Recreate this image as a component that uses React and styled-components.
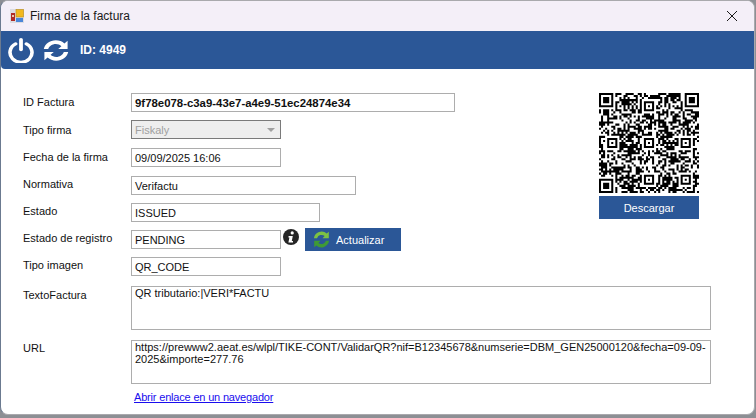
import React from "react";
import styled, { createGlobalStyle } from "styled-components";

const GlobalStyle = createGlobalStyle`
  html, body {
    margin: 0;
    padding: 0;
    width: 756px;
    height: 418px;
    overflow: hidden;
    background: #8d8f94;
  }
`;

// v8 qr is 49 modules. The data part is only noise from a seeded generator.
const QR_SIZE = 49;
const buildQr = () => {
  const cells = [];
  let seed = 4949;
  for (let y = 0; y < QR_SIZE; y++) {
    const row = [];
    for (let x = 0; x < QR_SIZE; x++) {
      seed = (seed * 1103515245 + 12345) & 0x7fffffff;
      row.push((seed >> 16) % 100 < 53);
    }
    cells.push(row);
  }
  const stamp = (ox, oy, size) => {
    for (let y = -1; y <= size; y++) {
      for (let x = -1; x <= size; x++) {
        const cx = ox + x;
        const cy = oy + y;
        if (cx < 0 || cy < 0 || cx >= QR_SIZE || cy >= QR_SIZE) continue;
        const d = Math.max(
          Math.abs(x - (size - 1) / 2),
          Math.abs(y - (size - 1) / 2)
        );
        const half = (size - 1) / 2;
        if (d > half) cells[cy][cx] = false;
        else if (size === 7) cells[cy][cx] = d !== 2;
        else cells[cy][cx] = d !== 1;
      }
    }
  };
  stamp(0, 0, 7);
  stamp(42, 0, 7);
  stamp(0, 42, 7);
  [
    [22, 4],
    [4, 22],
    [22, 22],
    [40, 22],
    [22, 40],
    [40, 40],
  ].forEach(([x, y]) => stamp(x, y, 5));
  for (let i = 8; i < 41; i++) {
    cells[6][i] = i % 2 === 0;
    cells[i][6] = i % 2 === 0;
  }
  return cells;
};

const QrCode = () => {
  const cells = buildQr();
  let d = "";
  cells.forEach((row, y) =>
    row.forEach((on, x) => {
      if (on) d += `M${x} ${y}h1v1h-1z`;
    })
  );
  return (
    <QrSvg viewBox={`0 0 ${QR_SIZE} ${QR_SIZE}`}>
      <path d={d} fill="#000" />
    </QrSvg>
  );
};

const AppIcon = () => (
  <svg width="14" height="14" viewBox="0 0 14 14">
    <rect x="0" y="0" width="14" height="14" fill="#dcdce2" />
    <rect x="1" y="4" width="4" height="8" fill="#b02a25" />
    <rect x="2" y="6" width="2" height="2" fill="#e8c8b0" />
    <rect x="6" y="0.5" width="7.5" height="7.5" fill="#f2b81f" stroke="#b98a1a" strokeWidth="0.6" />
    <rect x="6" y="9" width="7" height="4" fill="#4a86d8" />
  </svg>
);

const PowerIcon = () => (
  <svg width="28" height="25" viewBox="0 0 28 28" preserveAspectRatio="none" fill="none">
    <path
      d="M8.6 6.6A11 11 0 1 0 19.4 6.6"
      stroke="#fff"
      strokeWidth="3.6"
      strokeLinecap="round"
    />
    <path d="M14 2v11" stroke="#fff" strokeWidth="3.8" strokeLinecap="round" />
  </svg>
);

const RefreshIcon = () => (
  <svg width="28" height="25" viewBox="0 0 28 28" preserveAspectRatio="none" fill="#fff">
    <path d="M1.8 12.4C2.8 6.8 7.8 2.6 13.8 2.6c3.4 0 6.4 1.3 8.6 3.5L25.6 3v9.4h-9.4l3.2-3.2c-1.4-1.5-3.4-2.4-5.6-2.4-3.6 0-6.7 2.4-7.6 5.6z" />
    <path d="M26.2 15.6c-1 5.6-6 9.8-12 9.8-3.4 0-6.4-1.3-8.6-3.5L2.4 25v-9.4h9.4l-3.2 3.2c1.4 1.5 3.4 2.4 5.6 2.4 3.6 0 6.7-2.4 7.6-5.6z" />
  </svg>
);

const GreenRefresh = () => (
  <svg width="17" height="17" viewBox="1.5 1.5 13 13">
    <path
      d="M2.2 7A6 6 0 0 1 12 3.4L13.6 2v5H8.8l1.6-1.7A3.7 3.7 0 0 0 4.6 7z"
      fill="#7cc143"
    />
    <path
      d="M13.8 9A6 6 0 0 1 4 12.6L2.4 14V9h4.8l-1.6 1.7A3.7 3.7 0 0 0 11.4 9z"
      fill="#3f9a35"
    />
  </svg>
);

const InfoIcon = () => (
  <svg width="16" height="16" viewBox="0 0 16 16">
    <circle cx="8" cy="8" r="8" fill="#262626" />
    <circle cx="9.2" cy="3.9" r="1.6" fill="#fff" />
    <path d="M5.6 7h4.2l-1 5h1.2v1.6H5.4l1-5.2H5.4z" fill="#fff" />
  </svg>
);

const CloseIcon = () => (
  <svg width="10" height="10" viewBox="0 0 10 10">
    <path d="M0 0l10 10M10 0L0 10" stroke="#1a1a1a" strokeWidth="1" fill="none" />
  </svg>
);

const fields = [
  { label: "ID Factura", value: "9f78e078-c3a9-43e7-a4e9-51ec24874e34", width: 324, bold: true, top: 0, drop: 1 },
  { label: "Tipo firma", select: true, value: "Fiskaly", width: 150, top: 8, drop: 2 },
  { label: "Fecha de la firma", value: "09/09/2025 16:06", width: 150, top: 9, drop: 1 },
  { label: "Normativa", value: "Verifactu", width: 225, top: 9, drop: 0 },
  { label: "Estado", value: "ISSUED", width: 189, top: 8, drop: 0 },
  { label: "Estado de registro", value: "PENDING", width: 150, action: true, top: 8, drop: 0 },
  { label: "Tipo imagen", value: "QR_CODE", width: 150, top: 8, drop: 0 },
];

const App = () => {
  return (
    <>
      <GlobalStyle />
      <Window>
        <TitleBar>
          <TitleLeft>
            <AppIcon />
            <Title>Firma de la factura</Title>
          </TitleLeft>
          <CloseIcon />
        </TitleBar>
        <Toolbar>
          <PowerIcon />
          <RefreshIcon />
          <ToolbarId>ID: 4949</ToolbarId>
        </Toolbar>
        <Content>
          <TopArea>
            <FormColumn>
              {fields.map((field) => (
                <Row key={field.label} $top={field.top}>
                  <Label $drop={field.drop}>{field.label}</Label>
                  {field.select ? (
                    <SelectBox $width={field.width}>
                      {field.value}
                      <Caret />
                    </SelectBox>
                  ) : (
                    <Field $width={field.width} $bold={field.bold}>
                      {field.value}
                    </Field>
                  )}
                  {field.action && (
                    <>
                      <InfoSlot>
                        <InfoIcon />
                      </InfoSlot>
                      <ActionButton>
                        <GreenRefresh />
                        Actualizar
                      </ActionButton>
                    </>
                  )}
                </Row>
              ))}
            </FormColumn>
            <QrColumn>
              <QrCode />
              <DownloadButton>Descargar</DownloadButton>
            </QrColumn>
          </TopArea>
          <AreaRow>
            <Label $drop={1}>TextoFactura</Label>
            <TextArea>QR tributario:|VERI*FACTU</TextArea>
          </AreaRow>
          <AreaRow>
            <Label $drop={0}>URL</Label>
            <TextArea>
              https://prewww2.aeat.es/wlpl/TIKE-CONT/ValidarQR?nif=B12345678&amp;numserie=DBM_GEN25000120&amp;fecha=09-09-2025&amp;importe=277.76
            </TextArea>
          </AreaRow>
          <LinkRow>
            <OpenLink href="#">Abrir enlace en un navegador</OpenLink>
          </LinkRow>
        </Content>
      </Window>
    </>
  );
};

const Window = styled.div`
  box-sizing: border-box;
  width: 755px;
  height: 415px;
  background: #fff;
  border: 1px solid #a9a9ad;
  border-left: 1px solid #6b7a90;
  border-radius: 8px;
  overflow: hidden;
  font-family: "Liberation Sans", Arial, sans-serif;
  font-size: 11px;
  color: #111;
`;
const TitleBar = styled.div`
  height: 30px;
  background: #f4eff8;
  display: flex;
  align-items: center;
  justify-content: space-between;
  padding: 0 17px 0 9px;
`;
const TitleLeft = styled.div`
  display: flex;
  align-items: center;
  gap: 6px;
`;
const Title = styled.span`
  font-size: 12px;
  color: #1a1a1a;
`;
const Toolbar = styled.div`
  height: 38px;
  background: #2b5797;
  display: flex;
  align-items: center;
  padding-left: 6px;
  gap: 7px;
  border-radius: 0 0 0 4px;
`;
const ToolbarId = styled.span`
  margin-left: 3px;
  color: #fff;
  font-weight: 700;
  font-size: 12px;
`;
const Content = styled.div`
  padding: 24px 43px 0 22px;
`;
const TopArea = styled.div`
  display: flex;
  justify-content: space-between;
  align-items: flex-start;
  padding-right: 12px;
`;
const FormColumn = styled.div`
  display: flex;
  flex-direction: column;
`;
const Row = styled.div`
  display: flex;
  align-items: flex-start;
  height: 19px;
  margin-top: ${(p) => p.$top}px;
`;
const Label = styled.label`
  width: 108px;
  flex: none;
  line-height: 17px;
  padding-top: ${(p) => p.$drop}px;
`;
const Field = styled.div`
  box-sizing: border-box;
  width: ${(p) => p.$width}px;
  height: 19px;
  border: 1px solid #adadad;
  padding: 0 3px;
  line-height: 18px;
  font-size: ${(p) => (p.$bold ? "11.4px" : "11px")};
  font-weight: ${(p) => (p.$bold ? 700 : 400)};
  white-space: nowrap;
  overflow: hidden;
`;
const SelectBox = styled.div`
  box-sizing: border-box;
  width: ${(p) => p.$width}px;
  height: 19px;
  border: 1px solid #7a7a7a;
  background: #eeeeee;
  color: #a0a0a0;
  padding: 0 3px;
  line-height: 18px;
  display: flex;
  align-items: center;
  justify-content: space-between;
`;
const Caret = styled.span`
  width: 0;
  height: 0;
  margin-right: 2px;
  border-left: 4px solid transparent;
  border-right: 4px solid transparent;
  border-top: 4px solid #a0a0a0;
`;
const InfoSlot = styled.span`
  display: flex;
  margin: -1px 0 0 2px;
`;
const ActionButton = styled.button`
  box-sizing: border-box;
  width: 96px;
  height: 23px;
  margin: -2px 0 0 6px;
  padding: 0 0 0 8px;
  border: none;
  background: #2b5797;
  color: #fff;
  font: inherit;
  display: flex;
  align-items: center;
  gap: 6px;
`;
const QrColumn = styled.div`
  display: flex;
  flex-direction: column;
  align-items: center;
  gap: 3px;
`;
const QrSvg = styled.svg`
  width: 100px;
  height: 100px;
  display: block;
`;
const DownloadButton = styled.button`
  width: 100px;
  height: 23px;
  border: none;
  padding: 0;
  background: #2b5797;
  color: #fff;
  font: inherit;
`;
const AreaRow = styled.div`
  display: flex;
  align-items: flex-start;
  margin-top: 10px;
`;
const TextArea = styled.div`
  box-sizing: border-box;
  width: 580px;
  height: 44px;
  border: 1px solid #adadad;
  padding: 0 3px;
  line-height: 12px;
  overflow-wrap: anywhere;
`;
const LinkRow = styled.div`
  margin: 7px 0 0 111px;
`;
const OpenLink = styled.a`
  color: #1a0dee;
  text-decoration: underline;
  letter-spacing: -0.18px;
`;

export default App;
